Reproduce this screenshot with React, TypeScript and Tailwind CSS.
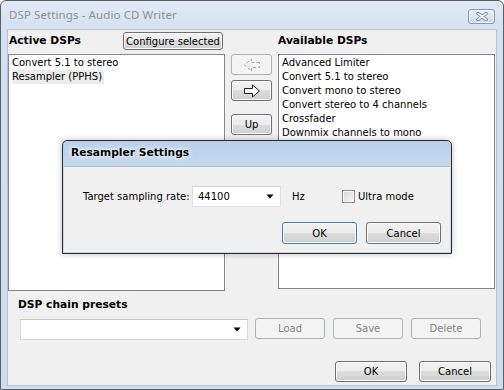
import React from 'react'

const ui = "font-['DejaVu_Sans',sans-serif] text-[10px] text-black"
const head = "font-['DejaVu_Sans',sans-serif] font-bold text-[10.7px] text-black"

const btn =
  'flex items-center justify-center rounded-[3px] border border-[#707070] bg-[linear-gradient(to_bottom,#f2f2f2_0%,#ebebeb_50%,#dddddd_50%,#cfcfcf_100%)] shadow-[inset_0_0_0_1px_#fbfbfb]'
const btnOff =
  'flex items-center justify-center rounded-[3px] border border-[#adb2b5] bg-[#f4f4f4] text-[#838383]'

function Arrow({ left = false, disabled = false }: { left?: boolean; disabled?: boolean }) {
  return (
    <svg width="18" height="14" viewBox="0 0 18 14" className={left ? '-scale-x-100' : ''}>
      <polygon
        points="1.5,4.5 9.5,4.5 9.5,1 16.5,7 9.5,13 9.5,9.5 1.5,9.5"
        fill={disabled ? 'none' : '#ffffff'}
        stroke={disabled ? '#a8a8a8' : '#202020'}
        strokeWidth="1"
        strokeDasharray={disabled ? '3 2' : undefined}
      />
    </svg>
  )
}

function DropArrow() {
  return (
    <svg width="8" height="5" viewBox="0 0 8 5">
      <polygon points="0.5,0.5 7.5,0.5 4,4.5" fill="#000" />
    </svg>
  )
}

export default function App() {
  const available = [
    'Advanced Limiter',
    'Convert 5.1 to stereo',
    'Convert mono to stereo',
    'Convert stereo to 4 channels',
    'Crossfader',
    'Downmix channels to mono',
  ]

  return (
    <div className="relative w-[504px] h-[390px] overflow-hidden bg-white">
      {/* main window frame */}
      <div className="flex flex-col w-[504px] h-[390px] rounded-t-[6px] border border-[#5a5f66] bg-[linear-gradient(to_bottom,#e2eaf5_0px,#d3e0ef_30px,#cfdcec_100%)]">
        {/* title bar */}
        <div className="flex items-center h-[28px] pl-[8px] pr-[8px]">
          <span className="font-['Noto_Sans',sans-serif] text-[11.5px] text-[#8f9298] tracking-[0.1px]">
            DSP Settings - Audio CD Writer
          </span>
          <div className="ml-auto mt-[3px] flex items-center justify-center w-[27px] h-[15px] rounded-[3px] border border-[#8a98a8] bg-[linear-gradient(to_bottom,#e9f0f8,#cfdbea)] shadow-[inset_0_0_0_1px_#eef3f9]">
            <svg width="12" height="9" viewBox="0 0 12 9">
              <path d="M2 1.5 L10 7.5 M10 1.5 L2 7.5" stroke="#6b7888" strokeWidth="3.4" strokeLinecap="round" />
              <path d="M2 1.5 L10 7.5 M10 1.5 L2 7.5" stroke="#ffffff" strokeWidth="1.6" strokeLinecap="round" />
            </svg>
          </div>
        </div>

        {/* client area */}
        <div className="mx-[6px] h-[357px] border border-[#b4c3d4] bg-[#f0f0f0]">
          {/* header row */}
          <div className="flex items-center pt-[2px] pl-[1px]">
            <span className={`${head} w-[114px] pt-[1px]`}>Active DSPs</span>
            <div className={`${btn} ${ui} w-[100px] h-[18px]`}>Configure selected</div>
            <span className={`${head} ml-[55px] pt-[1px]`}>Available DSPs</span>
          </div>

          {/* lists row */}
          <div className="flex items-start mt-[4px]">
            <div className="w-[217px] h-[237px] border border-[#828790] bg-white pl-[3px] pt-[1px]">
              <div className={`${ui} leading-[14px]`}>Convert 5.1 to stereo</div>
              <div className={`${ui} leading-[14px] w-fit pr-[2px] bg-[#ececec]`}>Resampler (PPHS)</div>
            </div>

            <div className="flex flex-col ml-[6px] w-[41px]">
              <div className={`${btnOff} h-[21px]`}>
                <Arrow left disabled />
              </div>
              <div className={`${btn} h-[21px] mt-[5px]`}>
                <Arrow />
              </div>
              <div className={`${btn} ${ui} h-[21px] mt-[13px]`}>Up</div>
            </div>

            <div className="ml-[6px] w-[217px] h-[235px] border border-[#828790] bg-white pl-[3px] pt-[1px]">
              {available.map((a) => (
                <div key={a} className={`${ui} leading-[14px]`}>
                  {a}
                </div>
              ))}
            </div>
          </div>

          {/* presets */}
          <div className={`${head} ml-[10px] mt-[6px] h-[16px] leading-[16px]`}>DSP chain presets</div>
          <div className="flex items-start mt-[5px]">
            <div className="ml-[12px] mt-[1px] w-[228px] h-[21px] border border-[#d9d9d9] border-t-[#c5c5c5] bg-white flex items-center justify-end pr-[6px]">
              <DropArrow />
            </div>
            <div className={`${btnOff} ${ui} !text-[#838383] ml-[7px] w-[70px] h-[21px]`}>Load</div>
            <div className={`${btnOff} ${ui} !text-[#838383] ml-[8px] w-[70px] h-[21px]`}>Save</div>
            <div className={`${btnOff} ${ui} !text-[#838383] ml-[8px] w-[70px] h-[21px]`}>Delete</div>
          </div>

          <div className="flex justify-end gap-[12px] mt-[21px] pr-[5px]">
            <div className={`${btn} ${ui} w-[72px] h-[21px]`}>OK</div>
            <div className={`${btn} ${ui} w-[72px] h-[21px]`}>Cancel</div>
          </div>
        </div>
      </div>

      {/* Resampler Settings dialog */}
      <div className="absolute left-[62px] top-[140px] w-[390px] h-[114px] flex flex-col border border-[#2b2b2b] rounded-t-[5px] bg-[linear-gradient(to_bottom,#b7cfeb_0px,#c6d9ef_25px,#c4d7ee_100%)] shadow-[0_0_6px_rgba(0,0,0,0.25)]">
        <div className="flex items-center h-[25px] pl-[8px]">
          <span className={`${head} text-[10.5px] [text-shadow:0_0_6px_#ffffff,0_0_3px_#ffffff]`}>Resampler Settings</span>
        </div>
        <div className="flex-1 mx-[1px] mb-[1px] bg-[#f0f0f0] border-t border-[#a9bfd8]">
          <div className="flex items-center h-[21px] mt-[19px] pl-[19px]">
            <span className={`${ui} w-[109px]`}>Target sampling rate:</span>
            <div className="w-[89px] h-[21px] border border-[#e0e0e0] border-t-[#cfcfcf] bg-white flex items-center pl-[5px] pr-[6px]">
              <span className={ui}>44100</span>
              <span className="ml-auto">
                <DropArrow />
              </span>
            </div>
            <span className={`${ui} ml-[11px] w-[50px]`}>Hz</span>
            <div className="w-[13px] h-[13px] border border-[#8f8f8f] bg-[linear-gradient(135deg,#d6d6d6,#f6f6f6)] shadow-[inset_0_0_0_1px_#f4f4f4]" />
            <span className={`${ui} ml-[3px]`}>Ultra mode</span>
          </div>
          <div className="flex justify-end gap-[9px] mt-[15px] pr-[9px]">
            <div className={`${btn} ${ui} !border-[#3c7fb1] shadow-[inset_0_0_0_1px_#a6d8f5] w-[75px] h-[22px]`}>OK</div>
            <div className={`${btn} ${ui} w-[75px] h-[22px]`}>Cancel</div>
          </div>
        </div>
      </div>
    </div>
  )
}
